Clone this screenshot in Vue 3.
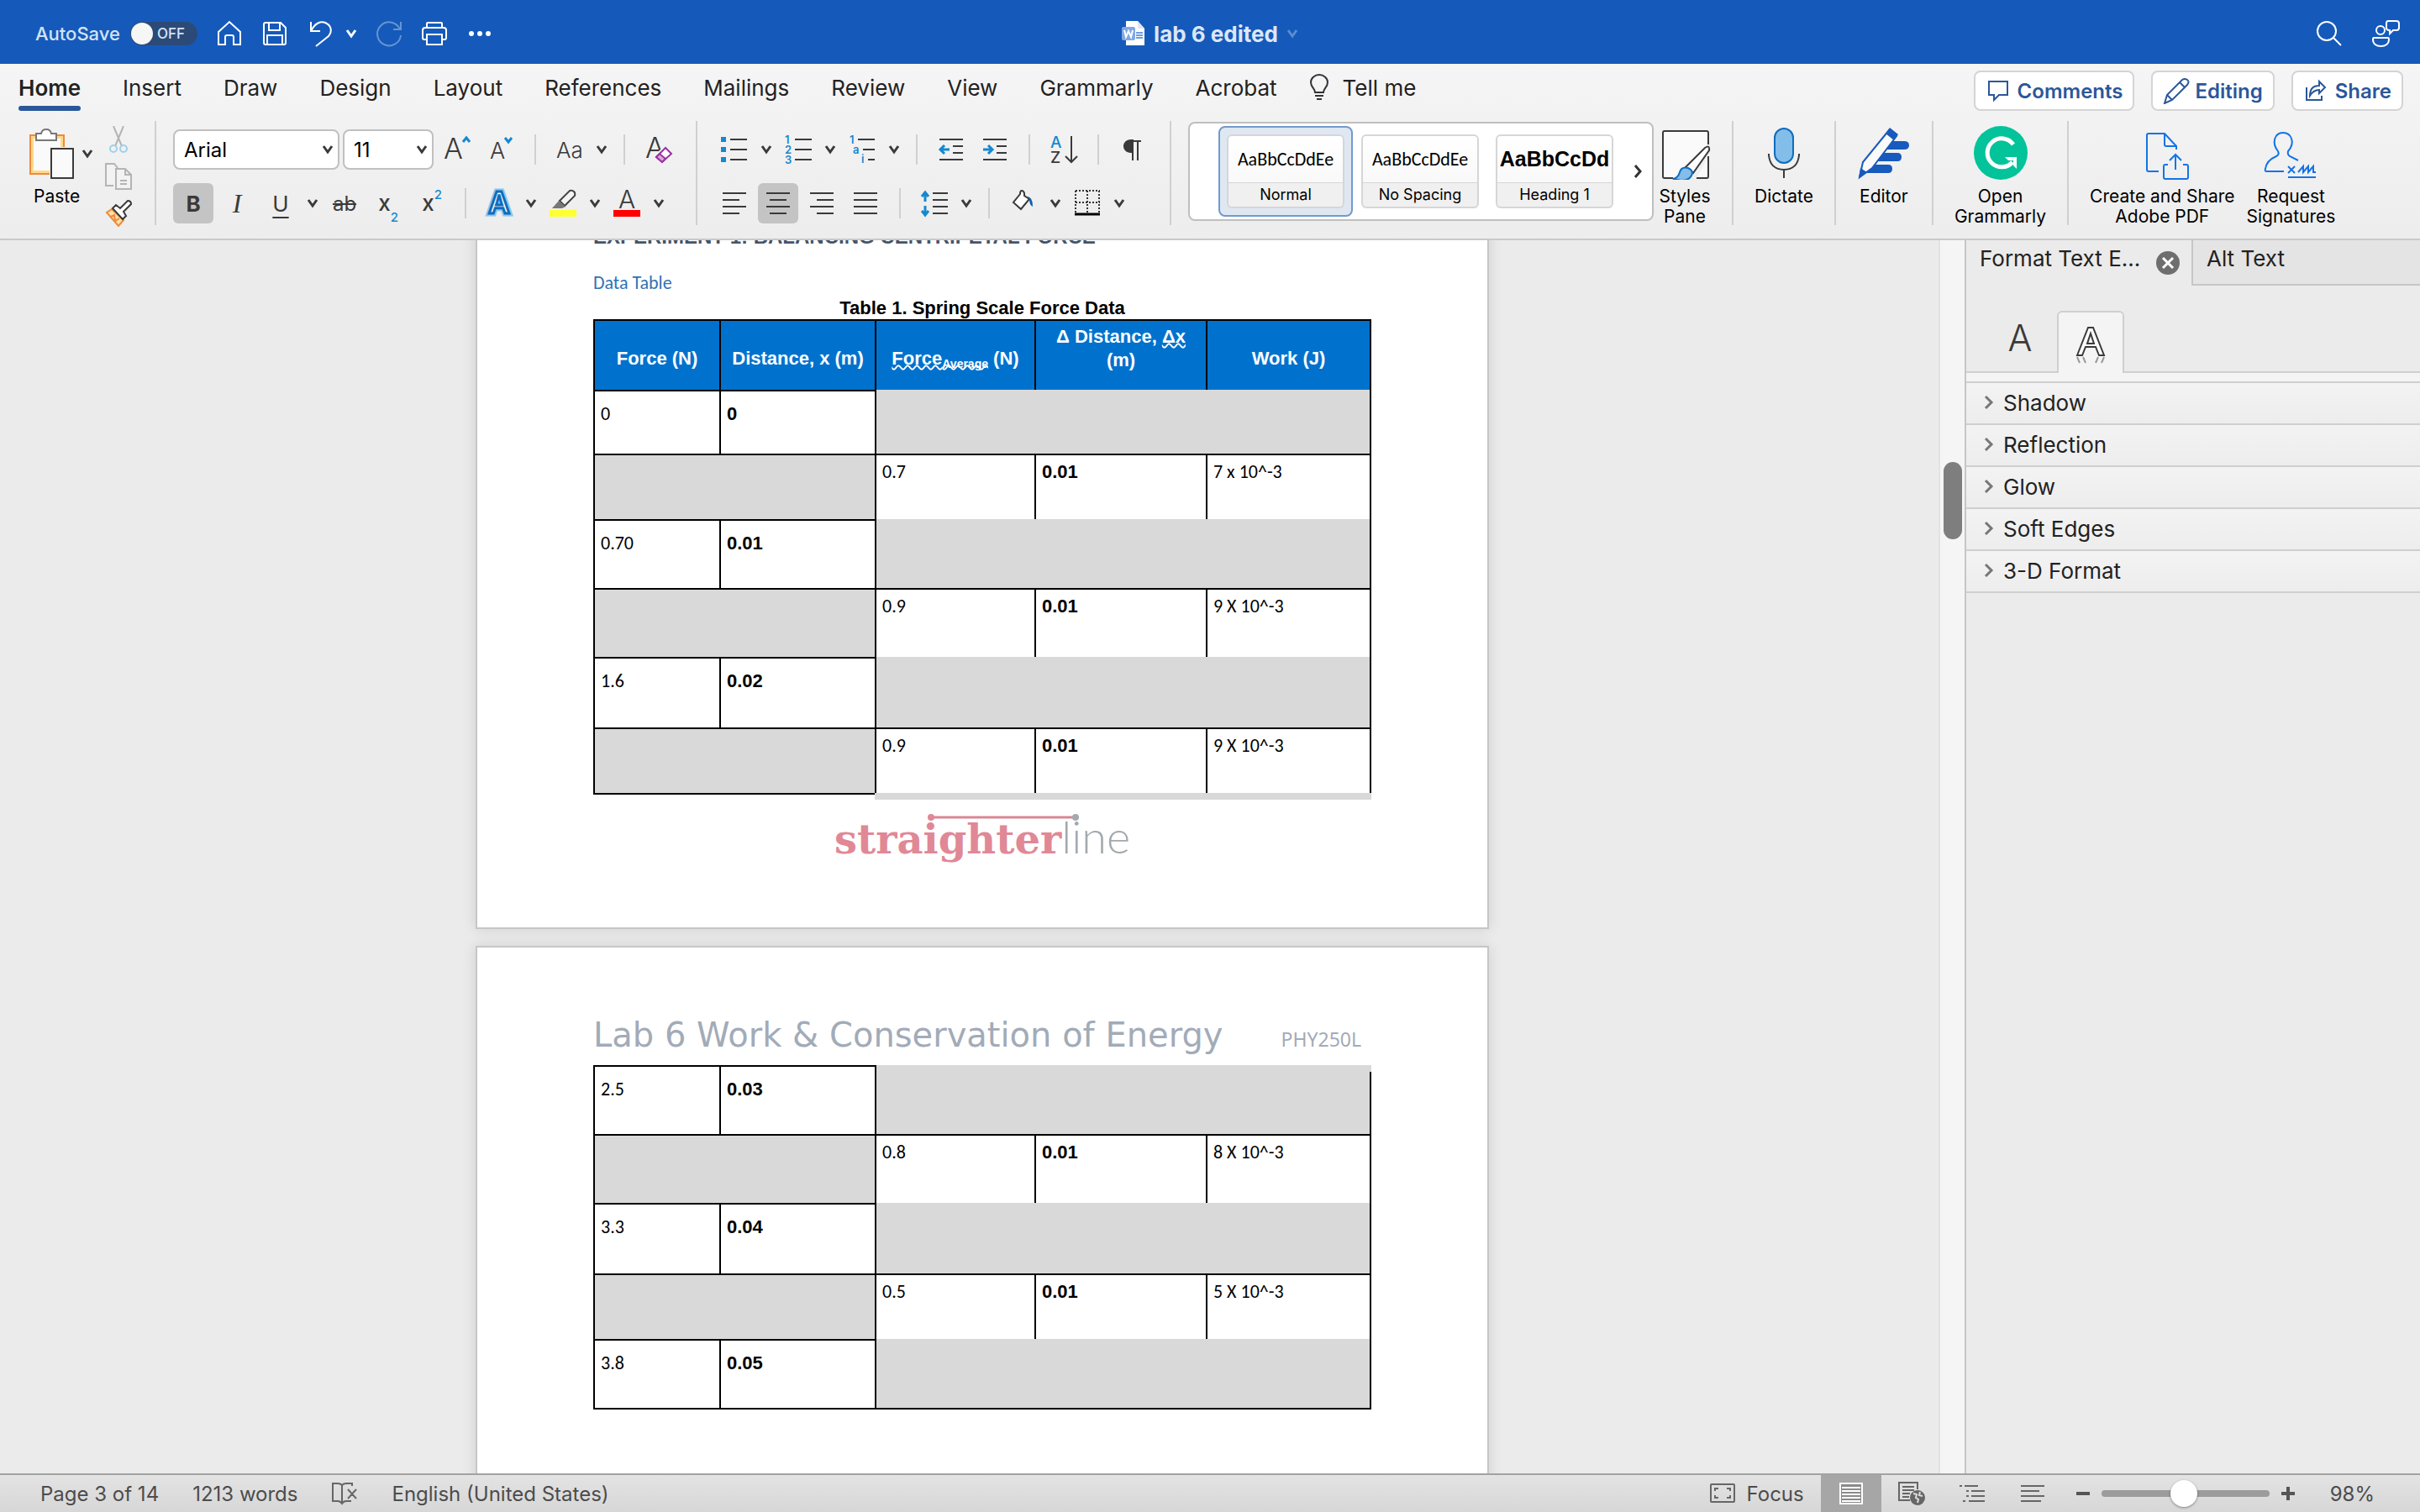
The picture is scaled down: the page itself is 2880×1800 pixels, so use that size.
<script setup>
import { h, ref } from 'vue'

const Chevron = () => h('svg', { class: 'chevron', viewBox: '0 0 14 12', width: 14, height: 12 }, [
  h('path', { d: 'M2 2l5 7 5-7', fill: 'none', stroke: 'currentColor', 'stroke-width': 3 })
])

const tabs = ['Home', 'Insert', 'Draw', 'Design', 'Layout', 'References', 'Mailings', 'Review', 'View', 'Grammarly', 'Acrobat']
const activeTab = ref('Home')

const styles = [
  { name: 'Normal', sample: 'AaBbCcDdEe' },
  { name: 'No Spacing', sample: 'AaBbCcDdEe' },
  { name: 'Heading 1', sample: 'AaBbCcDd', heading: true }
]
const activeStyle = ref('Normal')

const effects = ['Shadow', 'Reflection', 'Glow', 'Soft Edges', '3-D Format']

// a reading has force + distance, an interval has average, delta and work
const pageOne = [
  { height: 76, force: '0', distance: '0' },
  { height: 78, average: '0.7', delta: '0.01', work: '7 x 10^-3' },
  { height: 82, force: '0.70', distance: '0.01' },
  { height: 82, average: '0.9', delta: '0.01', work: '9 X 10^-3' },
  { height: 84, force: '1.6', distance: '0.02' },
  { height: 78, average: '0.9', delta: '0.01', work: '9 X 10^-3' }
]
const pageTwo = [
  { height: 82, force: '2.5', distance: '0.03' },
  { height: 82, average: '0.8', delta: '0.01', work: '8 X 10^-3' },
  { height: 84, force: '3.3', distance: '0.04' },
  { height: 78, average: '0.5', delta: '0.01', work: '5 X 10^-3' },
  { height: 84, force: '3.8', distance: '0.05' }
]

const autoSave = ref(false)
const font = ref('Arial')
const size = ref('11')
const zoom = ref(49)
</script>

<template>
  <div class="word">
    <header class="titlebar">
      <div class="quick">
        <label class="autosave">
          <span>AutoSave</span>
          <span class="toggle">
            <input v-model="autoSave" type="checkbox">
            <span class="toggle-text">OFF</span>
          </span>
        </label>
        <button aria-label="Home">
          <svg class="line" viewBox="0 0 32 32"><path d="M3 14L16 2l13 12v15h-8V20q0-2-2-2h-6q-2 0-2 2v9H3z" /></svg>
        </button>
        <button aria-label="Save">
          <svg class="line" viewBox="0 0 32 32"><path d="M5 3h18l6 6v18q0 2-2 2H5q-2 0-2-2V5q0-2 2-2zM9 3v9h13V3M7 29V18h18v11" /></svg>
        </button>
        <div class="undo">
          <button aria-label="Undo">
            <svg class="line" viewBox="0 0 32 32"><path d="M5 2v11h11M5 13C10 3 17 1 22 3c7 3 9 10 4 16L11 31" /></svg>
          </button>
          <Chevron />
        </div>
        <button aria-label="Redo" class="faded">
          <svg class="line" viewBox="0 0 32 32"><path d="M30 2v9h-9M29 11A14 14 0 1 0 30 18" /></svg>
        </button>
        <button aria-label="Print">
          <svg class="line" viewBox="0 0 32 32"><path d="M7 23H4q-2 0-2-2v-9q0-3 3-3h22q3 0 3 3v9q0 2-2 2h-3M7 9V4q0-1 1-1h16q1 0 1 1v5M7 17h18v12H7z" /></svg>
        </button>
        <button aria-label="More">
          <svg viewBox="0 0 32 32" fill="#fff"><circle cx="6" cy="16" r="3" /><circle cx="16" cy="16" r="3" /><circle cx="26" cy="16" r="3" /></svg>
        </button>
      </div>
      <div class="doc-title">
        <svg viewBox="0 0 28 32" width="28" height="32">
          <path d="M5 1h14l8 9v20H5z" fill="#fff" /><path d="M19 1v9h8" fill="#dfe6f2" />
          <path d="M17 15h8M17 18h8M17 21h8" stroke="#6d9be0" stroke-width="2" />
          <rect x="0" y="8" width="16" height="16" rx="2" fill="#83a9e3" />
          <path d="M3 12l2 8 3-7 3 7 2-8" fill="none" stroke="#fff" stroke-width="2" />
        </svg>
        <h1>lab 6 edited</h1>
        <Chevron class="dim" />
      </div>
      <div class="account">
        <button aria-label="Search">
          <svg class="line" viewBox="0 0 32 32"><circle cx="13" cy="13" r="11" /><path d="M21 21l9 9" /></svg>
        </button>
        <button aria-label="Sharing">
          <svg class="line" viewBox="0 0 34 32"><circle cx="11" cy="12" r="5" /><path d="M3 21h17q1 0 1 2c0 5-4 8-9.500 8S2 28 2 23q0-2 1-2zM20 1h10q3 0 3 3v5q0 3-3 3h-4l-4 4v-4q-4 0-4-3V4q0-3 2-3z" /></svg>
        </button>
      </div>
    </header>

    <section class="ribbon">
      <div class="tab-row">
        <nav class="tabs">
          <button v-for="tab in tabs" :key="tab" class="tab" :class="{ active: tab === activeTab }" @click="activeTab = tab">{{ tab }}</button>
          <button class="tab tell-me">
            <svg viewBox="0 0 24 32" width="24" height="32" fill="none" stroke="#333" stroke-width="2">
              <path d="M7 22C7 17 2 16 2 10a10 9 0 0 1 20 0c0 6-5 7-5 12zM7 26h10M9 30h6" />
            </svg>
            Tell me
          </button>
        </nav>
        <div class="actions">
          <button class="action">
            <svg viewBox="0 0 26 28" width="26" height="28"><path d="M2 3h22v16H14l-6 6v-6H2z" /></svg>
            Comments
          </button>
          <button class="action editing">
            <svg viewBox="0 0 32 32" width="32" height="32"><path d="M2 31l3-10L23 3q3-2 6 0t0 6L11 27zM5 21l6 6M20 6l6 6" /></svg>
            Editing
          </button>
          <button class="action">
            <svg viewBox="0 0 26 28" width="26" height="28"><path d="M2 10v15h18v-5M6 20c0-8 4-12 11-12V3l7 7-7 7v-4c-5 0-8 2-11 7z" /></svg>
            Share
          </button>
        </div>
      </div>

      <div class="ribbon-body">
        <div class="group clipboard">
          <button class="paste">
            <span class="paste-icon">
              <svg viewBox="0 0 56 62" width="56" height="62">
                <path d="M3 9h40v46H3z" fill="#ffd98c" stroke="#ee8a3c" stroke-width="2" />
                <path d="M7 13h32v38H7z" fill="#fafafa" />
                <path d="M10 15V7h6q1-5 6-5t6 5h6v8z" fill="#fff" stroke="#777" stroke-width="2" />
                <path d="M26 23h30v38H26z" fill="#f4f4f4" /><path d="M28 25h26v35H28z" fill="#fafafa" stroke="#3a3a3a" stroke-width="2" />
              </svg>
              <Chevron />
            </span>
            <span class="paste-label">Paste</span>
          </button>
          <div class="clip-tools">
            <button aria-label="Cut">
              <svg viewBox="0 0 32 32" fill="none" stroke-width="2"><path d="M10 0l10 24M22 0L12 24" stroke="#b4b4b4" /><circle cx="10" cy="27" r="4" stroke="#9fd0ea" /><circle cx="22" cy="27" r="4" stroke="#9fd0ea" /></svg>
            </button>
            <button aria-label="Copy">
              <svg viewBox="0 0 32 32" fill="#f2f2f2" stroke="#b4b4b4" stroke-width="2"><path d="M10 27H1V1h10l4 5" /><path d="M13 7h11l7 7v17H13zM24 7v7h7M18 21h8M18 25h8" /></svg>
            </button>
            <button aria-label="Format painter">
              <svg viewBox="0 0 32 32" stroke-width="2"><path d="M2 15l14 16 6-7L8 11z" fill="#ffe0a3" stroke="#ee8a3c" /><path d="M7 20l4-2 1 7 5-3" fill="none" stroke="#ee8a3c" /><path d="M9 10l4-4 5 4 9-9q4 0 4 4l-9 9 3 5-4 4z" fill="#fff" stroke="#3a3a3a" /></svg>
            </button>
          </div>
        </div>

        <div class="group font-group">
          <div class="row">
            <span class="picker wide">
              <select v-model="font" aria-label="Font"><option>Arial</option></select>
              <Chevron />
            </span>
            <span class="picker">
              <select v-model="size" aria-label="Font size"><option>11</option></select>
              <Chevron />
            </span>
            <button class="tool" aria-label="Grow font">
              <svg viewBox="0 0 32 32"><text x="0" y="27" class="a-light" font-size="34">A</text><path class="blue" d="M23 7l4-5 4 5" /></svg>
            </button>
            <button class="tool" aria-label="Shrink font">
              <svg viewBox="0 0 32 32"><text x="3" y="27" class="a-light" font-size="27">A</text><path class="blue" d="M21 2l4 5 4-5" /></svg>
            </button>
            <span class="sep"></span>
            <button class="tool case">Aa</button>
            <Chevron class="drop" />
            <span class="sep"></span>
            <button class="tool" aria-label="Clear formatting">
              <svg viewBox="0 0 32 32"><text x="0" y="26" class="a-light" font-size="34">A</text><path d="M11 23L23 11l9 9-12 12h-3l-6-6z" fill="#f2f2f2" /><path d="M13 25L24 14l7 7-11 10z" fill="#fff" stroke="#9b30a0" stroke-width="2" /><path d="M13 25l4-4 7 6-4 4z" fill="#d9a6dc" stroke="#9b30a0" stroke-width="2" /></svg>
            </button>
          </div>
          <div class="row">
            <button class="tool on bold">B</button>
            <button class="tool italic">I</button>
            <button class="tool underline">U</button>
            <Chevron class="drop" />
            <button class="tool strike">ab</button>
            <button class="tool script">x<sub>2</sub></button>
            <button class="tool script">x<sup>2</sup></button>
            <span class="sep tight"></span>
            <button class="tool" aria-label="Text effects">
              <svg viewBox="0 0 32 32"><text x="16" y="28" class="glow" font-size="35" text-anchor="middle">A</text><text x="16" y="28" class="effect" font-size="35" text-anchor="middle">A</text></svg>
            </button>
            <Chevron class="drop" />
            <button class="tool" aria-label="Highlight">
              <svg viewBox="0 0 32 32"><path d="M12 13L24 1q3-1 5 1t1 5L18 19z" fill="#f4f4f4" stroke="#444" stroke-width="2" /><path d="M11 13l8 7-4 2H3z" fill="#777" /><path d="M0 24h32v8H0z" fill="#ff3" /></svg>
            </button>
            <Chevron class="drop" />
            <button class="tool" aria-label="Font color">
              <svg viewBox="0 0 32 32"><text x="16" y="22" class="a-light" font-size="30" text-anchor="middle">A</text><path d="M0 24h32v8H0z" fill="red" /></svg>
            </button>
            <Chevron class="drop" />
          </div>
        </div>

        <div class="group">
          <div class="row">
            <button class="tool" aria-label="Bullets">
              <svg viewBox="0 0 32 32"><path d="M0 1h6v6H0zM0 13h6v6H0zM0 25h6v6H0z" fill="#1488d0" /><path class="bar" d="M11 4h20M11 16h20M11 28h20" /></svg>
            </button>
            <Chevron class="drop" />
            <button class="tool" aria-label="Numbering">
              <svg viewBox="0 0 32 32"><text x="0" y="9" class="num">1</text><text x="0" y="21" class="num">2</text><text x="0" y="33" class="num">3</text><path class="bar" d="M12 4h20M12 16h20M12 28h20" /></svg>
            </button>
            <Chevron class="drop" />
            <button class="tool" aria-label="Multilevel list">
              <svg viewBox="0 0 32 32"><text x="1" y="9" class="num">1</text><text x="5" y="21" class="num">a</text><text x="15" y="32" class="num">i</text><path class="bar" d="M11 4h20M17 16h14M23 28h8" /></svg>
            </button>
            <Chevron class="drop" />
            <span class="sep"></span>
            <button class="tool" aria-label="Decrease indent">
              <svg viewBox="0 0 32 32"><path class="bar" d="M2 4h28M18 12h12M18 20h12M2 28h28" /><path class="blue" d="M14 16H3M8 11l-5 5 5 5" /></svg>
            </button>
            <button class="tool" aria-label="Increase indent">
              <svg viewBox="0 0 32 32"><path class="bar" d="M2 4h28M18 12h12M18 20h12M2 28h28" /><path class="blue" d="M2 16h11M8 11l5 5-5 5" /></svg>
            </button>
            <span class="sep"></span>
            <button class="tool" aria-label="Sort">
              <svg viewBox="0 0 32 32"><text x="0" y="14" font-size="19" class="sort-a">A</text><text x="0" y="32" font-size="19" class="sort-z">Z</text><path d="M25 0v31M18 24l7 7 7-7" fill="none" stroke="#3a3a3a" stroke-width="2" /></svg>
            </button>
            <span class="sep"></span>
            <button class="tool" aria-label="Show paragraph marks">
              <svg viewBox="0 0 32 32"><path d="M15 5h11v2H15z M14 4h3v16h-3C2 20 2 4 14 4z" fill="#3a3a3a" /><path d="M16 5v24M22 5v24" stroke="#3a3a3a" stroke-width="2" /></svg>
            </button>
          </div>
          <div class="row">
            <button class="tool" aria-label="Align left">
              <svg viewBox="0 0 32 32"><path class="bar" d="M2 4h28M2 12h20M2 20h28M2 28h20" /></svg>
            </button>
            <button class="tool on" aria-label="Center">
              <svg viewBox="0 0 32 32"><path class="bar" d="M2 4h28M6 12h20M2 20h28M6 28h20" /></svg>
            </button>
            <button class="tool" aria-label="Align right">
              <svg viewBox="0 0 32 32"><path class="bar" d="M2 4h28M10 12h20M2 20h28M10 28h20" /></svg>
            </button>
            <button class="tool" aria-label="Justify">
              <svg viewBox="0 0 32 32"><path class="bar" d="M2 4h28M2 12h28M2 20h28M2 28h28" /></svg>
            </button>
            <span class="sep"></span>
            <button class="tool" aria-label="Line spacing">
              <svg viewBox="0 0 32 32"><path class="bar" d="M14 4h18M14 12h18M14 20h18M14 28h18" /><path class="blue" d="M5 14V4M1 8l4-5 4 5M5 19v11M1 25l4 5 4-5" /></svg>
            </button>
            <Chevron class="drop" />
            <span class="sep"></span>
            <button class="tool" aria-label="Shading">
              <svg viewBox="0 0 32 32"><path d="M12 5L4 15l9 8 10-12-6-4V4q-1-3-3-3t-2 4z" fill="#fff" stroke="#3a3a3a" stroke-width="2" /><path d="M20 8q7 0 7 12-4-2-4-9z" fill="#0f5fae" /></svg>
            </button>
            <Chevron class="drop" />
            <button class="tool" aria-label="Borders">
              <svg viewBox="0 0 32 32"><path d="M2 1h29M2 15h29M2 1v26M16 1v26M30 1v26" stroke="#333" stroke-width="2" stroke-dasharray="2 2" /><path d="M1 29h30" stroke="#000" stroke-width="3" /></svg>
            </button>
            <Chevron class="drop" />
          </div>
        </div>

        <div class="group styles-group">
          <div class="gallery">
            <button v-for="s in styles" :key="s.name" class="style-card" :class="{ active: s.name === activeStyle }" @click="activeStyle = s.name">
              <span class="sample" :class="{ heading: s.heading }">{{ s.sample }}</span>
              <span class="style-name">{{ s.name }}</span>
            </button>
            <svg class="more" viewBox="0 0 12 18" width="12" height="18"><path d="M2 2l6 7-6 7" fill="none" stroke="#333" stroke-width="3" /></svg>
          </div>
          <button class="big">
            <svg viewBox="0 0 64 64">
              <path d="M60 22V8q0-2-2-2H8q-2 0-2 2v52q0 2 2 2h10M46 62h12q2 0 2-2V36" fill="#fafafa" stroke="#3a3a3a" stroke-width="2" />
              <path d="M33 49L56 26q6-4 5 3L42 56z" fill="#fff" stroke="#3a3a3a" stroke-width="2" />
              <path d="M18 63q6-1 8-8t10-5q7 3 4 9t-12 6z" fill="#83bdea" stroke="#0f6cbd" stroke-width="2" />
            </svg>
            <span>Styles<br>Pane</span>
          </button>
        </div>

        <div class="group roomy">
          <button class="big">
            <svg viewBox="0 0 64 64"><rect x="21" y="3" width="22" height="41" rx="11" fill="#83bdea" stroke="#0f6cbd" stroke-width="2" /><path d="M14 33v2q2 17 18 17t18-17v-2M32 52v10" fill="none" stroke="#3a3a3a" stroke-width="2" /></svg>
            <span>Dictate</span>
          </button>
        </div>
        <div class="group roomy">
          <button class="big">
            <svg viewBox="0 0 64 64"><path d="M34 18h22q6 0 6 5t-6 5H28zM28 32h20q5 0 5 5t-5 5H20zM20 46h17q5 0 5 5t-5 5H10z" fill="#185abd" /><path d="M3 61l4-18L38 5l9 7-29 38z" fill="#fafafa" stroke="#185abd" stroke-width="2" /><path d="M34 9l5-7 10 8-5 7zM2 62l2-12 8 5z" fill="#185abd" /></svg>
            <span>Editor</span>
          </button>
        </div>
        <div class="group roomy">
          <button class="big">
            <svg viewBox="0 0 64 64"><circle cx="32" cy="32" r="32" fill="#03c39a" /><path d="M47 22A17 17 0 1 0 46 43" fill="none" stroke="#fff" stroke-width="5" /><path d="M37 37h14v14l-4-4V41H41z" fill="#fff" /></svg>
            <span>Open<br>Grammarly</span>
          </button>
        </div>
        <div class="group roomy acrobat">
          <button class="big">
            <svg class="adobe" viewBox="0 0 64 64"><path d="M28 54H16q-2 0-2-2V11q0-2 2-2h19l14 15v4M35 9v13q0 2 2 2h12M39 46h-3q-2 0-2 2v13q0 2 2 2h25q2 0 2-2V48q0-2-2-2h-4M48 52V34M41 41l7-7 7 7" /></svg>
            <span>Create and Share<br>Adobe PDF</span>
          </button>
          <button class="big">
            <svg class="adobe" viewBox="0 0 64 64"><path d="M24 54H3q-2 0-1-3c1-8 6-12 13-15q4-2 2-6c-8-10-4-22 6-22s15 12 6 22q-1 4 2 6l10 5M29 48l8 8M37 48l-8 8M41 55l6-7v7l6-7v7l6-7v7h3M29 61h33" /></svg>
            <span>Request<br>Signatures</span>
          </button>
        </div>
      </div>
    </section>

    <main class="workspace">
      <div class="canvas">
        <article class="page first">
          <h2>EXPERIMENT 1: BALANCING CENTRIPETAL FORCE</h2>
          <h3>Data Table</h3>
          <table>
            <caption>Table 1. Spring Scale Force Data</caption>
            <colgroup><col class="c1"><col class="c2"><col class="c3"><col class="c4"><col class="c5"></colgroup>
            <thead>
              <tr>
                <th>Force (N)</th>
                <th>Distance, x (m)</th>
                <th><span class="squiggle">Force<sub>Average</sub></span> (N)</th>
                <th class="top">Δ Distance, <span class="squiggle">Δx</span><br>(m)</th>
                <th>Work (J)</th>
              </tr>
            </thead>
            <tbody>
              <tr v-for="(row, i) in pageOne" :key="i" :style="{ height: row.height + 'px' }">
                <template v-if="row.force">
                  <td class="reading">{{ row.force }}</td>
                  <td class="reading strong">{{ row.distance }}</td>
                  <td class="blank open" colspan="3"></td>
                </template>
                <template v-else>
                  <td class="blank" colspan="2"></td>
                  <td>{{ row.average }}</td>
                  <td class="strong">{{ row.delta }}</td>
                  <td>{{ row.work }}</td>
                </template>
              </tr>
              <tr class="split">
                <td colspan="2"></td>
                <td colspan="3" class="rest"></td>
              </tr>
            </tbody>
          </table>
          <footer class="logo">
            <svg viewBox="0 0 180 10" width="180" height="10"><path d="M4 5h172" stroke="#d98893" stroke-width="3" /><circle cx="4" cy="5" r="4" fill="#e08896" /><circle cx="176" cy="5" r="4" fill="#a3aaae" /></svg>
            <span class="straighter">straighter</span><span class="thin">line</span>
          </footer>
        </article>

        <article class="page">
          <header class="page-header">
            <span class="course">Lab 6 Work &amp; Conservation of Energy</span>
            <span class="code">PHY250L</span>
          </header>
          <table class="last">
            <colgroup><col class="c1"><col class="c2"><col class="c3"><col class="c4"><col class="c5"></colgroup>
            <tbody>
              <tr v-for="(row, i) in pageTwo" :key="i" :style="{ height: row.height + 'px' }">
                <template v-if="row.force">
                  <td class="reading">{{ row.force }}</td>
                  <td class="reading strong">{{ row.distance }}</td>
                  <td class="blank open" colspan="3"></td>
                </template>
                <template v-else>
                  <td class="blank" colspan="2"></td>
                  <td>{{ row.average }}</td>
                  <td class="strong">{{ row.delta }}</td>
                  <td>{{ row.work }}</td>
                </template>
              </tr>
            </tbody>
          </table>
        </article>
      </div>
      <div class="scrollbar"><div class="thumb"></div></div>

      <aside class="pane">
        <div class="pane-tabs">
          <div class="pane-tab current">
            <span>Format Text E...</span>
            <button class="close" aria-label="Close">
              <svg viewBox="0 0 28 28" width="28" height="28"><circle cx="14" cy="14" r="14" fill="#6e6e6e" /><path d="M8 8l12 12M20 8L8 20" stroke="#fff" stroke-width="3" /></svg>
            </button>
          </div>
          <div class="pane-tab other">Alt Text</div>
        </div>
        <div class="icon-tabs">
          <button class="icon-tab" aria-label="Text fill and outline">
            <svg viewBox="0 0 48 56" width="48" height="56"><text x="20" y="36" class="a-light" font-size="43" text-anchor="middle">A</text></svg>
          </button>
          <button class="icon-tab selected" aria-label="Text effects">
            <svg viewBox="0 0 48 56" width="48" height="56">
              <path d="M8 40L21 7h6l13 33h-6l-4-10H18l-4 10zM20 26h8l-4-12z" fill="#fff" stroke="#3a3a3a" stroke-width="2" />
              <path d="M8 42l3 7M15 42l3 7M33 42l-3 7M40 42l-3 7" stroke="#999" stroke-width="2" />
            </svg>
          </button>
        </div>
        <ul class="effects">
          <li v-for="effect in effects" :key="effect">
            <button>
              <svg viewBox="0 0 12 18" width="12" height="18"><path d="M2 2l7 7-7 7" fill="none" stroke="#777" stroke-width="3" /></svg>
              {{ effect }}
            </button>
          </li>
        </ul>
      </aside>
    </main>

    <footer class="status">
      <span>Page 3 of 14</span>
      <span>1213 words</span>
      <svg viewBox="0 0 32 28" width="32" height="28" fill="none" stroke="#666" stroke-width="2"><path d="M13 4q-2-2-5-2H2v21h6q3 0 5 3 2-3 5-3h6M13 4v22M13 4q2-2 5-2h7v3M20 9l10 11M30 9L20 20" /></svg>
      <span>English (United States)</span>
      <div class="views">
        <button class="focus">
          <svg viewBox="0 0 30 24" width="30" height="24" fill="none" stroke="#666" stroke-width="2"><rect x="1" y="1" width="28" height="21" rx="1" /><path d="M6 9V6h4M20 6h4v3M6 14v3h4M20 17h4v-3" /></svg>
          Focus
        </button>
        <button class="view on" aria-label="Print layout">
          <svg viewBox="0 0 32 28" width="32" height="28"><path d="M3 2h26v24H3z" fill="#8a8a8a" stroke="#fff" stroke-width="2" /><path d="M5 7h22M5 11h22M5 15h22M5 19h22M5 23h22" stroke="#fff" stroke-width="2" /></svg>
        </button>
        <button class="view" aria-label="Web layout">
          <svg viewBox="0 0 32 28" width="32" height="28" stroke="#666" stroke-width="2" fill="none"><path d="M14 22H1V1h22v8M5 6h14M5 10h14M5 14h9M5 18h8" /><circle cx="23" cy="19" r="9" fill="#666" stroke="none" /><path d="M18 14l4 1-1 4 3 2-1 4M26 12l-1 4 4 1" stroke="#ddd" /></svg>
        </button>
        <button class="view" aria-label="Outline">
          <svg viewBox="0 0 32 28" width="32" height="28" stroke="#666" stroke-width="2"><path d="M1 5h3M7 5h16M9 11h3M15 11h16M9 17h3M15 17h16M5 23h3M12 23h19" /></svg>
        </button>
        <button class="view" aria-label="Draft">
          <svg viewBox="0 0 32 28" width="32" height="28" stroke="#666" stroke-width="2"><path d="M2 5h28M2 11h22M2 17h28M2 23h24" /></svg>
        </button>
      </div>
      <div class="zoom">
        <button aria-label="Zoom out"><svg viewBox="0 0 16 16" width="16" height="16"><path d="M0 8h16" stroke="#555" stroke-width="4" /></svg></button>
        <input v-model="zoom" type="range" min="0" max="100" aria-label="Zoom">
        <button aria-label="Zoom in"><svg viewBox="0 0 16 16" width="16" height="16"><path d="M0 8h16M8 0v16" stroke="#555" stroke-width="4" /></svg></button>
        <span class="percent">98%</span>
      </div>
    </footer>
  </div>
</template>

<style>
body {
  background: #ebebeb;
}
</style>

<style scoped>
.word {
  display: flex;
  flex-direction: column;
  height: 100vh;
  overflow: hidden;
  font-family: Inter, "Liberation Sans", sans-serif;
  font-size: 26px;
  color: #222;
}

button {
  font: inherit;
  color: inherit;
  background: none;
  border: 0;
  padding: 0;
  white-space: nowrap;
}

svg {
  display: block;
  flex: none;
}

h1,
h2,
h3,
ul {
  margin: 0;
  padding: 0;
  list-style: none;
}

/* title bar */
.titlebar {
  display: grid;
  grid-template-columns: 1fr auto 1fr;
  align-items: center;
  height: 76px;
  flex: none;
  padding: 4px 24px 0;
  background: #155aba;
  color: #fff;
  box-sizing: border-box;
}

.quick {
  display: flex;
  align-items: center;
  gap: 22px;
  padding-left: 18px;
}

.quick button,
.quick button svg {
  width: 32px;
  height: 32px;
}

.autosave {
  display: flex;
  align-items: center;
  gap: 12px;
  font-size: 22px;
  font-weight: 500;
  color: #d5e2f5;
}

.toggle {
  position: relative;
  display: flex;
}

.toggle input {
  appearance: none;
  width: 80px;
  height: 28px;
  margin: 0;
  border-radius: 14px;
  background: #2c4a77;
}

.toggle input::before {
  content: "";
  display: block;
  width: 26px;
  height: 26px;
  margin: 1px;
  border-radius: 50%;
  background: #f6f6f6;
}

.toggle-text {
  position: absolute;
  left: 32px;
  top: 3px;
  font-size: 17px;
  line-height: 22px;
}

.line {
  fill: none;
  stroke: #fff;
  stroke-width: 2;
}

.undo {
  display: flex;
  align-items: center;
  gap: 14px;
}

.faded {
  opacity: 0.35;
}

.doc-title {
  display: flex;
  align-items: center;
  gap: 10px;
}

.doc-title h1 {
  font-size: 26px;
  font-weight: 700;
  color: #dce7f6;
}

.dim {
  opacity: 0.3;
}

.account {
  display: flex;
  justify-content: flex-end;
  gap: 34px;
}

.account svg {
  height: 32px;
}

/* ribbon */
.ribbon {
  flex: none;
  padding-bottom: 16px;
  background: linear-gradient(#f5f5f5, #ededed);
  border-bottom: 2px solid #c9c9c9;
}

.tab-row {
  display: flex;
  justify-content: space-between;
  align-items: flex-end;
  height: 56px;
  padding: 0 20px 0 22px;
}

.tabs {
  display: flex;
  gap: 50px;
}

.tab {
  height: 56px;
  border-bottom: 6px solid transparent;
  padding-top: 6px;
}

.tab.active {
  position: relative;
  font-weight: 600;
}

.tab.active::after {
  content: "";
  position: absolute;
  left: 0;
  right: 0;
  bottom: -6px;
  height: 6px;
  border-radius: 3px;
  background: #2b579a;
}

.tell-me {
  display: flex;
  align-items: center;
  gap: 16px;
  margin-left: -12px;
}

.actions {
  display: flex;
  gap: 20px;
}

.action {
  display: flex;
  align-items: center;
  gap: 10px;
  height: 48px;
  padding: 0 12px 0 14px;
  border: 2px solid #d4d4d4;
  border-radius: 8px;
  background: #fff;
  font-size: 24px;
  font-weight: 600;
  color: #2b579a;
}

.action.editing {
  gap: 6px;
  padding-left: 12px;
}

.action svg {
  fill: none;
  stroke: #2b579a;
  stroke-width: 2;
}

.ribbon-body {
  display: flex;
  height: 124px;
  margin-top: 12px;
}

.group {
  padding: 0 20px;
  border-left: 2px solid #d0d0d0;
}

.group.roomy {
  padding: 0 25px;
}

.group.clipboard {
  display: flex;
  gap: 14px;
  padding: 0 27px 0 33px;
  border: 0;
}

.paste {
  display: flex;
  flex-direction: column;
  align-items: flex-start;
  padding-top: 8px;
}

.paste-icon {
  display: flex;
  align-items: center;
  gap: 8px;
}

.paste-label {
  margin-top: 8px;
  padding-left: 7px;
  font-size: 21px;
  line-height: 24px;
  color: #000;
}

.clip-tools {
  display: flex;
  flex-direction: column;
  gap: 12px;
  padding-top: 6px;
}

.clip-tools svg {
  width: 32px;
  height: 32px;
}

.chevron {
  color: #3a3a3a;
}

.titlebar .chevron {
  color: #fff;
}

.drop {
  width: 20px;
}

.row {
  display: flex;
  align-items: center;
  gap: 4px;
  height: 48px;
  margin-top: 10px;
}

.row + .row {
  margin-top: 16px;
}

.tool {
  display: flex;
  align-items: center;
  justify-content: center;
  width: 48px;
  height: 48px;
  border-radius: 6px;
  color: #3a3a3a;
}

.tool svg {
  width: 32px;
  height: 32px;
  overflow: visible;
}

.tool.on {
  background: #c4c4c4;
}

.sep {
  width: 2px;
  height: 36px;
  margin: 0 12px;
  background: #d0d0d0;
}

.sep.tight {
  margin: 0 11px;
}

.picker {
  position: relative;
  display: flex;
  width: 108px;
}

.picker.wide {
  width: 198px;
}

.picker select {
  appearance: none;
  width: 100%;
  height: 48px;
  padding: 0 11px;
  border: 2px solid #c0c0c0;
  border-radius: 8px;
  background: #fff;
  font: inherit;
  font-size: 24px;
  color: #000;
}

.picker .chevron {
  position: absolute;
  right: 7px;
  top: 18px;
}

.bold {
  font-weight: 700;
}

.italic {
  font-family: "Liberation Serif", serif;
  font-size: 32px;
  font-style: italic;
}

.underline {
  text-decoration: underline;
  text-underline-offset: 6px;
}

.strike {
  font-size: 24px;
  text-decoration: line-through;
}

.case {
  font-size: 26px;
  font-weight: 300;
}

.script {
  font-weight: 500;
  line-height: 30px;
}

.script sub,
.script sup {
  font-size: 15px;
  line-height: 15px;
  color: #1488d0;
}

.script sub {
  align-self: flex-end;
}

.script sup {
  align-self: flex-start;
  padding-top: 6px;
}

.a-light {
  font-family: Inter, sans-serif;
  font-weight: 300;
  fill: #3a3a3a;
}

.blue {
  fill: none;
  stroke: #1488d0;
  stroke-width: 3;
}

.bar {
  fill: none;
  stroke: #3a3a3a;
  stroke-width: 2;
}

.num {
  font-size: 13px;
  font-weight: 600;
  fill: #1488d0;
}

.sort-a {
  font-weight: 500;
  fill: #1488d0;
}

.sort-z {
  font-weight: 500;
  fill: #3a3a3a;
}

.glow {
  font-weight: 600;
  fill: none;
  stroke: #8cc8ef;
  stroke-width: 7;
}

.effect {
  font-weight: 600;
  fill: #fff;
  stroke: #0f6cbd;
  stroke-width: 3;
}

.group.styles-group {
  display: flex;
  padding-right: 24px;
}

.gallery {
  display: flex;
  align-items: center;
  height: 118px;
  margin-top: 1px;
  padding-left: 34px;
  border: 2px solid #bfbfbf;
  border-radius: 8px;
  background: #fff;
  box-sizing: border-box;
}

.style-card {
  display: flex;
  flex-direction: column;
  width: 160px;
  height: 108px;
  padding: 8px;
  border: 2px solid transparent;
  border-radius: 8px;
  color: #000;
}

.style-card.active {
  border-color: #7399cc;
  background: #dfe8f2;
}

.sample {
  display: flex;
  align-items: center;
  justify-content: center;
  height: 62px;
  border: 2px solid #d6d6d6;
  border-bottom-width: 1px;
  border-radius: 6px 6px 0 0;
  background: linear-gradient(#fff, #f9f9f9);
  font-family: Carlito, Lato, sans-serif;
  font-size: 22px;
  box-sizing: border-box;
}

.sample.heading {
  font-family: "Liberation Sans", sans-serif;
  font-size: 25px;
  font-weight: 700;
}

.style-name {
  height: 30px;
  border: 2px solid #d6d6d6;
  border-top: 0;
  border-radius: 0 0 6px 6px;
  background: #f0f0f0;
  font-size: 18px;
  line-height: 28px;
  box-sizing: border-box;
}

.more {
  margin: 0 10px 0 14px;
}

.big {
  display: flex;
  flex-direction: column;
  align-items: center;
  padding-top: 6px;
  font-size: 21px;
  line-height: 24px;
  color: #000;
}

.styles-group .big {
  padding-left: 5px;
}

.big svg {
  width: 64px;
  height: 64px;
  margin-bottom: 8px;
}

.acrobat {
  display: flex;
  gap: 14px;
}

.adobe {
  fill: none;
  stroke: #1473e6;
  stroke-width: 2;
}

/* document */
.workspace {
  display: flex;
  flex: 1;
  min-height: 0;
}

.canvas {
  display: flex;
  flex-direction: column;
  align-items: center;
  gap: 20px;
  flex: 1;
  min-width: 0;
  padding-left: 31px;
  overflow: hidden;
}

.page {
  flex: none;
  width: 926px;
  padding: 0 138px;
  border: 2px solid #c6c6c6;
  background: #fff;
  box-shadow: 0 0 16px rgba(0, 0, 0, 0.12);
}

.page.first {
  height: 834px;
  margin-top: -16px;
  border-top: 0;
}

.page + .page {
  height: 900px;
}

h2 {
  font-family: "Liberation Sans", Arial, sans-serif;
  font-size: 24px;
  line-height: 24px;
  color: #44546a;
}

h3 {
  margin-top: 31px;
  font-family: Carlito, Lato, sans-serif;
  font-size: 22px;
  font-weight: 400;
  line-height: 24px;
  color: #2e74b5;
}

table {
  width: 100%;
  table-layout: fixed;
  border-collapse: separate;
  border-spacing: 0;
  font-family: Carlito, Lato, sans-serif;
  font-size: 22px;
  line-height: 24px;
  color: #000;
}

caption {
  padding: 6px 0 1px;
  font-family: "Liberation Sans", Arial, sans-serif;
  font-size: 22px;
  font-weight: 700;
}

.c1 {
  width: 150px;
}

.c2 {
  width: 185px;
}

.c3 {
  width: 190px;
}

.c4 {
  width: 204px;
}

th {
  height: 84px;
  padding: 8px 0 0;
  border-top: 2px solid #000;
  border-left: 2px solid #000;
  background: #0072ce;
  font-family: "Liberation Sans", Arial, sans-serif;
  font-size: 22px;
  line-height: 28px;
  color: #fff;
  white-space: nowrap;
  box-sizing: border-box;
}

th.top {
  padding-top: 5px;
  vertical-align: top;
}

th sub {
  font-size: 14px;
  line-height: 14px;
  vertical-align: -4px;
}

.squiggle {
  text-decoration: underline wavy #fff 2px;
  text-decoration-skip-ink: none;
  text-underline-offset: 0;
}

td {
  padding: 8px 7px 0;
  border-top: 2px solid #000;
  border-left: 2px solid #000;
  vertical-align: top;
  box-sizing: border-box;
}

th:last-child,
td:last-child {
  border-right: 2px solid #000;
}

td.reading {
  padding-top: 15px;
}

td.strong {
  font-family: "Liberation Sans", Arial, sans-serif;
  font-size: 22px;
  font-weight: 700;
}

td.blank {
  background: #d9d9d9;
}

td.open {
  border-top: 0;
}

.split td {
  height: 8px;
  padding: 0;
  border-left: 0;
}

.split .rest {
  border: 0;
  background: #d9d9d9;
}

.last tr:first-child .open {
  position: relative;
}

.last tr:first-child .open::after {
  content: "";
  position: absolute;
  top: 0;
  right: -2px;
  width: 2px;
  height: 8px;
  background: #d9d9d9;
}

.last tr:last-child td {
  border-bottom: 2px solid #000;
}

.logo {
  position: relative;
  display: flex;
  justify-content: center;
  align-items: baseline;
  margin-top: 14px;
  line-height: 60px;
}

.logo svg {
  position: absolute;
  left: 398px;
  top: 2px;
}

.straighter {
  font-family: "DejaVu Serif", serif;
  font-size: 48px;
  font-weight: 700;
  color: #e08896;
}

.thin {
  font-family: Lato, sans-serif;
  font-size: 54px;
  font-weight: 300;
  color: #a3aaae;
}

.page-header {
  display: flex;
  justify-content: space-between;
  align-items: baseline;
  padding: 78px 12px 5px 0;
  line-height: 52px;
  color: #a2abb8;
}

.course {
  font-family: "DejaVu Sans", Verdana, sans-serif;
  font-size: 40px;
}

.code {
  font-family: "Noto Sans", sans-serif;
  font-size: 23px;
}

.scrollbar {
  width: 31px;
  flex: none;
  background: #f5f5f5;
  border-left: 2px solid #e2e2e2;
  box-sizing: border-box;
}

.thumb {
  width: 22px;
  height: 92px;
  margin: 264px auto 0;
  border-radius: 11px;
  background: #7e7e7e;
}

/* format pane */
.pane {
  width: 540px;
  flex: none;
  border-left: 2px solid #c6c6c6;
  background: #ebebeb;
}

.pane-tabs {
  display: flex;
}

.pane-tab {
  display: flex;
  justify-content: space-between;
  height: 54px;
  padding: 6px 16px;
  line-height: 32px;
  box-sizing: border-box;
}

.pane-tab.current {
  width: 268px;
  padding-right: 14px;
  white-space: nowrap;
}

.pane-tab.other {
  flex: 1;
  border-left: 2px solid #c6c6c6;
  border-bottom: 2px solid #c6c6c6;
  background: #e4e4e4;
}

.close {
  height: 28px;
  margin-top: 7px;
}

.icon-tabs {
  display: flex;
  padding: 30px 0 0 28px;
  border-bottom: 2px solid #cfcfcf;
}

.icon-tab {
  width: 80px;
  height: 72px;
  padding: 8px 16px 0;
}

.icon-tab svg {
  overflow: visible;
}

.icon-tab.selected {
  height: 74px;
  margin-bottom: -2px;
  border: 2px solid #cfcfcf;
  border-bottom: 0;
  border-radius: 6px 6px 0 0;
  padding: 6px 14px 0;
  background: #f4f4f4;
}

.effects {
  padding-top: 10px;
  background: #f4f4f4;
}

.effects li {
  height: 50px;
  border-top: 2px solid #cfcfcf;
  background: linear-gradient(#f3f3f3, #ededed);
  box-sizing: border-box;
}

.effects li:last-child {
  height: 52px;
  border-bottom: 2px solid #cfcfcf;
}

.effects button {
  display: flex;
  align-items: center;
  gap: 11px;
  width: 100%;
  height: 46px;
  padding-left: 21px;
}

/* status bar */
.status {
  display: flex;
  align-items: center;
  height: 46px;
  flex: none;
  gap: 40px;
  padding: 0 54px 0 48px;
  border-top: 2px solid #a2a2a2;
  background: linear-gradient(#e3e3e3, #d7d7d7);
  font-size: 24px;
  color: #4c4c4c;
  box-sizing: border-box;
}

.views {
  display: flex;
  align-items: center;
  height: 44px;
  margin-left: auto;
}

.focus {
  display: flex;
  align-items: center;
  gap: 14px;
  margin-right: 20px;
}

.view {
  display: flex;
  align-items: center;
  justify-content: center;
  width: 72px;
  height: 44px;
}

.view.on {
  background: #a6a6a6;
}

.zoom {
  display: flex;
  align-items: center;
  gap: 14px;
  margin-left: -24px;
}

.zoom input {
  appearance: none;
  width: 200px;
  height: 8px;
  margin: 0;
  border-radius: 4px;
  background: #9c9c9c;
}

.zoom input::-webkit-slider-thumb {
  appearance: none;
  width: 32px;
  height: 32px;
  border-radius: 50%;
  background: #fff;
  box-shadow: 0 1px 3px rgba(0, 0, 0, 0.4);
}

.percent {
  margin-left: 28px;
}
</style>
